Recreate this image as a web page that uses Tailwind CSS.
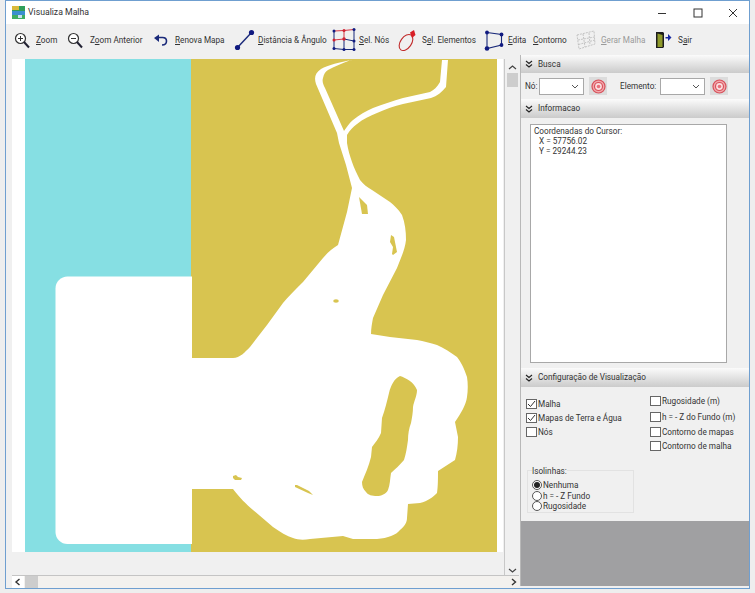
<!DOCTYPE html>
<html>
<head>
<meta charset="utf-8">
<script src="https://cdn.jsdelivr.net/npm/@tailwindcss/browser@4"></script>
</head>
<body class="m-0 bg-[#eeeeee] w-[755px] h-[593px] overflow-hidden font-['Roboto',sans-serif] text-[9px] text-[#222]">
<div class="ml-[5px] w-[745px] h-[589px] border border-[#6f9fd0] bg-[#f0f0f0] flex flex-col">
  <!-- title bar -->
  <div class="h-[23px] bg-white flex items-center shrink-0">
    <svg class="ml-[6px] w-[13px] h-[13px]" viewBox="0 0 13 13"><rect width="13" height="5" fill="#2f9e5a"/><rect x="0" y="0" width="7" height="4" fill="#d9b93a"/><rect y="5" width="13" height="4" fill="#3a8fd0"/><rect y="9" width="13" height="4" fill="#3fae63"/><rect x="6" y="9" width="4" height="3" fill="#c8e0f0"/></svg>
    <span class="ml-[3px] text-[8.700px] text-[#333]">Visualiza Malha</span>
    <div class="ml-auto flex items-center h-full">
      <svg class="w-[12px] h-[12px] mr-[24px]" viewBox="0 0 12 12"><path d="M2 6.500H10" stroke="#333" fill="none"/></svg>
      <svg class="w-[12px] h-[12px] mr-[23px]" viewBox="0 0 12 12"><rect x="2" y="2" width="8" height="8" stroke="#333" fill="none"/></svg>
      <svg class="w-[12px] h-[12px] mr-[10px]" viewBox="0 0 12 12"><path d="M2 2L10 10M10 2L2 10" stroke="#333" fill="none"/></svg>
    </div>
  </div>
  <!-- toolbar -->
  <div class="h-[31px] flex items-center shrink-0 pt-[1px] text-[8.200px] text-[#333]">
    <svg class="ml-[8px] w-[16px] h-[17px] shrink-0" viewBox="0 0 16 17"><circle cx="6.500" cy="6.500" r="5" fill="#fff" stroke="#333" stroke-width="1.200"/><path d="M4 6.500H9M6.500 4V9" stroke="#333"/><path d="M10 10L15 15.500" stroke="#223" stroke-width="2"/></svg>
    <span class="ml-[6px] w-[31px] shrink-0"><u>Z</u>oom</span>
    <svg class="w-[16px] h-[17px] shrink-0" viewBox="0 0 16 17"><circle cx="6.500" cy="6.500" r="5" fill="#fff" stroke="#333" stroke-width="1.200"/><path d="M4 6.500H9" stroke="#333"/><path d="M10 10L15 15.500" stroke="#223" stroke-width="2"/></svg>
    <span class="ml-[7px] w-[63px] shrink-0">Z<u>o</u>om Anterior</span>
    <svg class="w-[15px] h-[13px] shrink-0" viewBox="0 0 15 13"><path d="M5 3.500H9.500C12 3.500 13.500 5 13.500 7C13.500 9.500 11.500 11 9 11" fill="none" stroke="#1a2a7a" stroke-width="1.600"/><path d="M1 4L6 0.500V8Z" fill="#1a2a7a"/></svg>
    <span class="ml-[7px] w-[59px] shrink-0"><u>R</u>enova Mapa</span>
    <svg class="w-[21px] h-[22px] shrink-0" viewBox="0 0 21 22"><path d="M3.500 18.500L17.500 3.500" stroke="#1a2a7a" stroke-width="1.400"/><circle cx="3.500" cy="18.500" r="2.600" fill="#101a80"/><circle cx="17.500" cy="3.500" r="2.600" fill="#101a80"/></svg>
    <span class="ml-[3px] w-[74px] shrink-0"><u>D</u>istância &amp; Ângulo</span>
    <svg class="w-[24px] h-[24px] shrink-0" viewBox="0 0 24 24"><path d="M2 3V20.500L12 21.500L22 21.500V1.500M12 11V21.500M12 11L22 13" fill="none" stroke="#1a2a7a" stroke-width="1"/><path d="M2 3L12 2.500L22 1.500M2 12L12 11M12 2.500V11" fill="none" stroke="#d02030" stroke-width="0.900"/><g fill="#101a80"><circle cx="2" cy="3" r="1.500"/><circle cx="22" cy="1.500" r="1.500"/><circle cx="22" cy="13" r="1.500"/><circle cx="22" cy="21.500" r="1.500"/><circle cx="12" cy="21.500" r="1.500"/><circle cx="2" cy="20.500" r="1.500"/></g><g fill="#d02030"><circle cx="12" cy="2.500" r="1.500"/><circle cx="2" cy="12" r="1.500"/><circle cx="12" cy="11" r="1.700"/></g></svg>
    <span class="ml-[3px] w-[38px] shrink-0"><u>S</u>el. Nós</span>
    <svg class="w-[20px] h-[23px] shrink-0" viewBox="0 0 20 23"><ellipse cx="9" cy="13.500" rx="5.500" ry="9" transform="rotate(35 9 13.500)" fill="none" stroke="#c02a2a" stroke-width="1.100"/><path d="M17 1L13 3.500L15 9L18.500 6Z" fill="#d81f26"/></svg>
    <span class="ml-[5px] w-[62px] shrink-0">S<u>e</u>l. Elementos</span>
    <svg class="w-[20px] h-[21px] shrink-0" viewBox="0 0 20 21"><path d="M3 2.500L17.500 4.500V15L3 18.500Z" fill="none" stroke="#1a2a7a" stroke-width="1.100"/><g fill="#101a80"><circle cx="3" cy="2.500" r="1.900"/><circle cx="17.500" cy="4.500" r="1.900"/><circle cx="17.500" cy="15" r="1.900"/><circle cx="3" cy="18.500" r="2.300"/></g></svg>
    <span class="ml-[4px] w-[25px] shrink-0"><u>E</u>dita</span>
    <span class="w-[43px] shrink-0"><u>C</u>ontorno</span>
    <svg class="w-[20px] h-[20px] shrink-0" viewBox="0 0 20 20"><path d="M1 5L18 1L19 14L3 19ZM7 4L9 17M13 3L14 15M2 10L18.500 7M2.500 14.500L19 10" fill="none" stroke="#b8b8b8" stroke-width="0.800" stroke-dasharray="2 1"/></svg>
    <span class="ml-[5px] w-[54px] shrink-0 text-[#9a9a9a]"><u>G</u>erar Malha</span>
    <svg class="w-[17px] h-[18px] shrink-0" viewBox="0 0 17 18"><path d="M1 1H8.500V2H9V16H8.500V17H1Z" fill="#1c1c1c"/><path d="M2.500 2.500L7.500 4V16H2.500Z" fill="#8f9a2a"/><path d="M10.500 6H13V3L16.500 6.500L13 10V7.500H10.500Z" fill="#1a2aa0"/></svg>
    <span class="ml-[6px]">S<u>a</u>ir</span>
  </div>
  <!-- body -->
  <div class="flex-1 flex min-h-0">
    <!-- map column -->
    <div class="w-[513px] shrink-0 flex flex-col">
      <div class="flex-1 flex pl-[6px] pt-[4px] min-h-0">
        <div class="w-[491px] shrink-0 flex flex-col">
          <svg class="w-[491px] h-[493px] shrink-0 block" viewBox="12 59 491 493">
            <rect x="12" y="59" width="491" height="493" fill="#fff"/>
            <rect x="25" y="59" width="166" height="493" fill="#86dfe3"/>
            <rect x="191" y="59" width="306" height="493" fill="#d8c450"/>
            <path fill="#fff" d="M192 276.500H67.500A12 12 0 0 0 55.500 288.500V532A12 12 0 0 0 67.500 544H192Z"/>
            <path fill="#fff" d="M352 60C340 62 328 65 321 69C315 73 314 78 316 84L337 133L339 143L346 165L352 188L347 212L338 245C332 249 328 252 323 258L303 282C295 290 288 297 283 303L267 325L250 347C245 352 240 358 233 358H191V489H233C240 498 246 504 253 510L273 527C280 532 287 536 293 538C298 540 304 540 310 539L343 536L353 539H377C388 538 396 535 400 530C405 526 407 522 407 518L408 504L420 503C428 501 433 497 437 493C438 487 438 478 438 471L455 460C457 453 458 445 458 437L455 422C461 413 466 405 467 397C468 390 468 383 467 377C464 368 461 362 457 357C450 352 444 348 437 345C430 343 424 341 417 340C408 339 399 338 390 337L371 334C371 329 372 323 373 318L383 295L397 268C401 258 405 249 406 240C406 231 405 223 402 215C398 209 394 205 390 202C384 198 378 194 372 190C367 187 363 184 360 180C357 174 354 168 352 162C350 156 348 150 347 143L347 135C350 130 353 127 357 124C363 119 370 116 377 113C386 109 394 106 403 104L431 98C437 96 442 92 446 87L448 60H442L440 82C437 87 434 90 430 92L403 98C393 101 383 104 373 108C366 111 359 115 353 120C349 123 347 127 344 131L325 88C323 84 322 81 323 78C324 74 325 72 328 70C335 66 343 63 351 60Z"/>
            <g fill="#d8c450">
              <path d="M359 197L367 205L368 214H362Z"/>
              <path d="M391 235L394 237L397 252L393 255L392 254L393 247L390 242Z"/>
              <ellipse cx="336" cy="301" rx="2.800" ry="1.800"/>
              <path d="M400 376C406 378 414 382 417 390C417 396 414 401 413 407C413 412 412 418 411 423C409 428 408 434 408 440C407 447 406 454 404 460C400 465 395 469 391 473C390 479 390 485 388 490C386 494 381 496 377 496C372 496 368 495 366 492C363 489 362 486 362 482C365 474 369 466 371 457L372 447C375 443 379 438 381 433L382 418C385 410 387 401 389 393C391 385 394 379 400 376Z"/>
              <path d="M233 476L236 475L238 477L242 478L241 480H235L233 478Z"/>
              <path d="M295 485L297 485L309 491L313 495L308 493L295 487Z"/>
            </g>
          </svg>
          <div class="flex-1"></div>
        </div>
        <!-- vertical scrollbar -->
        <div class="w-[15px] h-[517px] shrink-0 border-l border-[#c8c8c8] bg-[#f0f0f0] flex flex-col items-center ml-[1px]">
          <svg class="w-[9px] h-[7px] mt-[5px] shrink-0" viewBox="0 0 9 7"><path d="M1 5L4.500 2L8 5" fill="none" stroke="#444" stroke-width="1.200"/></svg>
          <div class="w-[11px] h-[14px] mt-[2px] bg-[#cdcdcd]"></div>
          <svg class="w-[9px] h-[7px] mt-auto mb-[2px] shrink-0" viewBox="0 0 9 7"><path d="M1 2L4.500 5L8 2" fill="none" stroke="#444" stroke-width="1.200"/></svg>
        </div>
      </div>
      <!-- horizontal scrollbar -->
      <div class="h-[13px] ml-[6px] w-[507px] shrink-0 border-t border-[#c4c4c4] bg-[#f3f1ee] flex items-center">
        <svg class="w-[12px] h-[12px] shrink-0 bg-white" viewBox="0 0 12 12"><path d="M7.500 3L4 6L7.500 9" fill="none" stroke="#333" stroke-width="1.400"/></svg>
        <div class="w-[13px] h-[12px] ml-[1px] bg-[#cdcdcd]"></div>
        <svg class="w-[12px] h-[12px] ml-auto shrink-0" viewBox="0 0 12 12"><path d="M5 3L8.500 6L5 9" fill="none" stroke="#333" stroke-width="1.400"/></svg>
      </div>
    </div>
    <!-- right panel -->
    <div class="w-[229px] shrink-0 ml-[1px] flex flex-col border-l border-[#b8b8b8] text-[8.200px] text-[#333] h-[531px]">
      <div class="h-[18px] shrink-0 bg-gradient-to-b from-[#fbfbfb] to-[#cbcbcb] flex items-center pl-[4px]">
        <svg class="w-[8px] h-[8px] shrink-0" viewBox="0 0 8 8"><path d="M1 1L4 3.500L7 1M1 4.500L4 7L7 4.500" fill="none" stroke="#222" stroke-width="1.100"/></svg>
        <span class="ml-[5px]">Busca</span>
      </div>
      <div class="h-[26px] shrink-0 flex items-center pl-[4px]">
        <span class="w-[14px]">Nó:</span>
        <div class="w-[45px] h-[17px] bg-white border border-[#a8a8a8] flex items-center justify-end pr-[4px]"><svg class="w-[8px] h-[5px]" viewBox="0 0 8 5"><path d="M1 1L4 4L7 1" fill="none" stroke="#555"/></svg></div>
        <div class="ml-[5px] w-[18px] h-[18px] bg-[#dcdcdc] flex items-center justify-center"><svg class="w-[15px] h-[15px]" viewBox="0 0 15 15"><circle cx="7.500" cy="7.500" r="6.500" fill="#f2a8ac" stroke="#d8505a" stroke-width="1.200"/><circle cx="7.500" cy="7.500" r="4" fill="#fbdfe0" stroke="#d8505a" stroke-width="1.200"/><circle cx="7.500" cy="7.500" r="1.800" fill="#e8707a"/></svg></div>
        <span class="ml-[13px] w-[40px]">Elemento:</span>
        <div class="w-[45px] h-[17px] bg-white border border-[#a8a8a8] flex items-center justify-end pr-[4px]"><svg class="w-[8px] h-[5px]" viewBox="0 0 8 5"><path d="M1 1L4 4L7 1" fill="none" stroke="#555"/></svg></div>
        <div class="ml-[5px] w-[18px] h-[18px] bg-[#dcdcdc] flex items-center justify-center"><svg class="w-[15px] h-[15px]" viewBox="0 0 15 15"><circle cx="7.500" cy="7.500" r="6.500" fill="#f2a8ac" stroke="#d8505a" stroke-width="1.200"/><circle cx="7.500" cy="7.500" r="4" fill="#fbdfe0" stroke="#d8505a" stroke-width="1.200"/><circle cx="7.500" cy="7.500" r="1.800" fill="#e8707a"/></svg></div>
      </div>
      <div class="h-[19px] shrink-0 bg-gradient-to-b from-[#fbfbfb] to-[#cbcbcb] flex items-center pl-[4px]">
        <svg class="w-[8px] h-[8px] shrink-0" viewBox="0 0 8 8"><path d="M1 1L4 3.500L7 1M1 4.500L4 7L7 4.500" fill="none" stroke="#222" stroke-width="1.100"/></svg>
        <span class="ml-[5px]">Informacao</span>
      </div>
      <div class="h-[250px] shrink-0 pt-[6px] pl-[9px]">
        <div class="w-[197px] h-[239px] bg-white border border-[#a8a8a8] pl-[3px] pt-[1px] leading-[10px]">
          <div>Coordenadas do Cursor:</div>
          <div class="pl-[5px]">X = 57756.02</div>
          <div class="pl-[5px]">Y = 29244.23</div>
        </div>
      </div>
      <div class="h-[19px] shrink-0 bg-gradient-to-b from-[#fbfbfb] to-[#cbcbcb] flex items-center pl-[4px]">
        <svg class="w-[8px] h-[8px] shrink-0" viewBox="0 0 8 8"><path d="M1 1L4 3.500L7 1M1 4.500L4 7L7 4.500" fill="none" stroke="#222" stroke-width="1.100"/></svg>
        <span class="ml-[5px]">Configuração de Visualização</span>
      </div>
      <div class="h-[134px] shrink-0 bg-[#f0f0f0]">
        <div class="flex pl-[5px]">
          <div class="w-[124px] pt-[12px] flex flex-col gap-[4px]">
            <label class="flex items-center h-[10px]"><span class="w-[11px] h-[10px] border border-[#666] bg-white flex items-center justify-center"><svg class="w-[9px] h-[8px]" viewBox="0 0 9 8"><path d="M1 4L3.500 6.500L8 1" fill="none" stroke="#333"/></svg></span><span class="ml-[1px]">Malha</span></label>
            <label class="flex items-center h-[10px]"><span class="w-[11px] h-[10px] border border-[#666] bg-white flex items-center justify-center"><svg class="w-[9px] h-[8px]" viewBox="0 0 9 8"><path d="M1 4L3.500 6.500L8 1" fill="none" stroke="#333"/></svg></span><span class="ml-[1px]">Mapas de Terra e Água</span></label>
            <label class="flex items-center h-[10px]"><span class="w-[11px] h-[10px] border border-[#666] bg-white"></span><span class="ml-[1px]">Nós</span></label>
          </div>
          <div class="pt-[9px] flex flex-col">
            <label class="flex items-center h-[10px]"><span class="w-[11px] h-[10px] border border-[#666] bg-white"></span><span class="ml-[1px]">Rugosidade (m)</span></label>
            <label class="flex items-center h-[10px] mt-[6px]"><span class="w-[11px] h-[10px] border border-[#666] bg-white"></span><span class="ml-[1px]">h = - Z do Fundo (m)</span></label>
            <label class="flex items-center h-[10px] mt-[5px]"><span class="w-[11px] h-[10px] border border-[#666] bg-white"></span><span class="ml-[1px]">Contorno de mapas</span></label>
            <label class="flex items-center h-[10px] mt-[4px]"><span class="w-[11px] h-[10px] border border-[#666] bg-white"></span><span class="ml-[1px]">Contorno de malha</span></label>
          </div>
        </div>
        <div class="ml-[6px] mt-[19px] w-[107px] h-[43px] border border-[#e2e2e2] pl-[4px] leading-[10.500px]">
          <div class="-mt-[5px] mb-[4px] h-[10px]"><span class="bg-[#f0f0f0]">Isolinhas:</span></div>
          <label class="flex items-center h-[10.500px]"><span class="w-[10px] h-[10px] rounded-full border border-[#555] bg-white flex items-center justify-center"><span class="w-[6px] h-[6px] rounded-full bg-[#222]"></span></span><span class="ml-[1px]">Nenhuma</span></label>
          <label class="flex items-center h-[10.500px]"><span class="w-[10px] h-[10px] rounded-full border border-[#555] bg-white"></span><span class="ml-[1px]">h = - Z Fundo</span></label>
          <label class="flex items-center h-[10.500px]"><span class="w-[10px] h-[10px] rounded-full border border-[#555] bg-white"></span><span class="ml-[1px]">Rugosidade</span></label>
        </div>
      </div>
      <div class="flex-1 bg-[#a0a0a2]"></div>
    </div>
  </div>
</div>
</body>
</html>
